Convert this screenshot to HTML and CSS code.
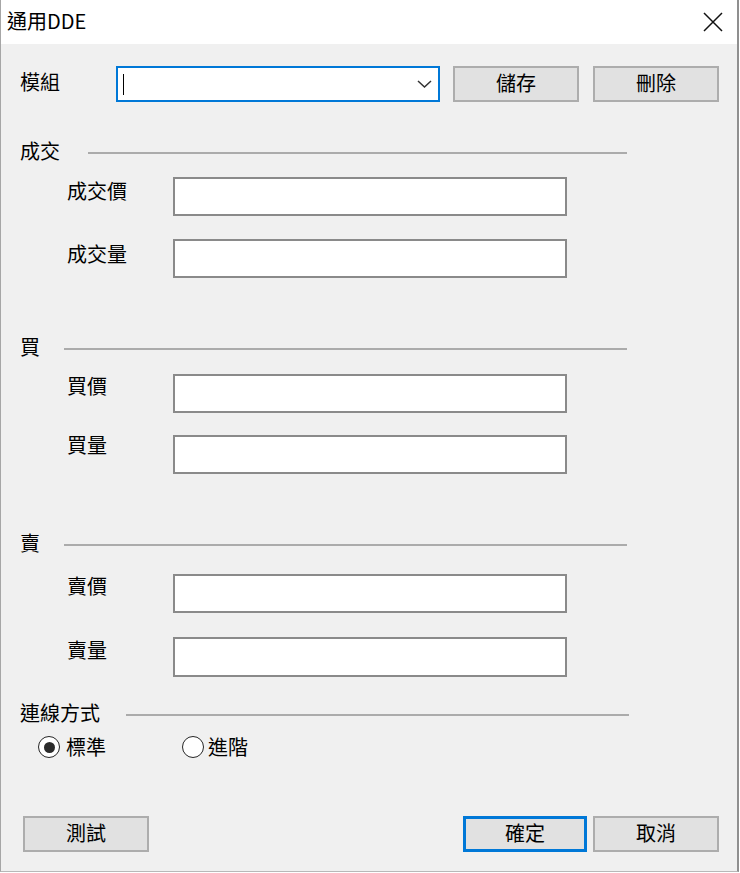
FILE: index.html
```html
<!DOCTYPE html>
<html lang="zh-Hant">
<head>
<meta charset="utf-8">
<title>通用DDE</title>
<link rel="stylesheet" href="styles.css">
</head>
<body>
<div class="window">
  <div class="titlebar">
    <span class="title">通用DDE</span>
    <svg class="close" width="20" height="20" viewBox="0 0 20 20"><path d="M1 1 L19 19 M19 1 L1 19" stroke="#111" stroke-width="1.5" fill="none"/></svg>
  </div>
  <div class="content">
    <div class="row-top">
      <span class="lbl-main">模組</span>
      <div class="combo">
        <span class="caret"></span>
        <svg class="chev" width="15" height="8" viewBox="0 0 15 8"><path d="M1 1 L7.5 7 L14 1" stroke="#333" stroke-width="1.5" fill="none"/></svg>
      </div>
      <button class="btn btn-save">儲存</button>
      <button class="btn btn-del">刪除</button>
    </div>

    <div class="ghead gh-deal"><span class="gtitle">成交</span><i class="rule rule-deal"></i></div>
    <div class="field f1"><span class="flabel">成交價</span><div class="input"></div></div>
    <div class="field f2"><span class="flabel">成交量</span><div class="input"></div></div>

    <div class="ghead gh-buy"><span class="gtitle">買</span><i class="rule rule-one"></i></div>
    <div class="field f3"><span class="flabel">買價</span><div class="input"></div></div>
    <div class="field f4"><span class="flabel">買量</span><div class="input"></div></div>

    <div class="ghead gh-sell"><span class="gtitle">賣</span><i class="rule rule-one"></i></div>
    <div class="field f5"><span class="flabel">賣價</span><div class="input"></div></div>
    <div class="field f6"><span class="flabel">賣量</span><div class="input input-tall"></div></div>

    <div class="ghead gh-conn"><span class="gtitle">連線方式</span><i class="rule rule-conn"></i></div>
    <div class="radio-row">
      <label class="radio r-std"><span class="circle checked"></span><span class="rtext">標準</span></label>
      <label class="radio r-adv"><span class="circle"></span><span class="rtext">進階</span></label>
    </div>

    <div class="row-bottom">
      <button class="btn btn-test">測試</button>
      <div class="right-btns">
        <button class="btn btn-ok">確定</button>
        <button class="btn btn-cancel">取消</button>
      </div>
    </div>
  </div>
</div>
</body>
</html>
```

FILE: styles.css
```css
* { box-sizing: border-box; }
html, body { margin: 0; padding: 0; background: #ffffff; }
body {
  font-family: "Noto Sans CJK TC", "Noto Sans", sans-serif;
  font-size: 20px;
  color: #000;
}
.window {
  width: 739px;
  height: 872px;
  background: #f0f0f0;
  border-left: 1px solid #a6a6a6;
  border-right: 2px solid #8f8f8f;
  border-bottom: 1px solid #b8b8b8;
}
.titlebar {
  height: 44px;
  background: #ffffff;
  display: flex;
  align-items: center;
  justify-content: space-between;
  padding-left: 6px;
  padding-right: 14px;
}
.title {
  font-size: 20px;
  line-height: 26px;
  padding-bottom: 2px;
}
.close { display: block; margin-top: -1px; }
.content { padding-top: 22px; }

.row-top {
  display: flex;
  align-items: center;
  height: 36px;
  padding-left: 19px;
}
.lbl-main { width: 96px; line-height: 26px; padding-bottom: 4px; }
.combo {
  width: 324px;
  height: 36px;
  background: #fff;
  border: 2px solid #0078d7;
  display: flex;
  align-items: center;
  padding-left: 5px;
  padding-right: 6px;
}
.caret { display: block; width: 1px; height: 21px; background: #000; }
.chev { display: block; margin-left: auto; }

.btn {
  font-family: "Noto Sans CJK TC", "Noto Sans", sans-serif;
  font-size: 20px;
  color: #000;
  background: #e1e1e1;
  border: 2px solid #adadad;
  height: 36px;
  width: 126px;
  padding: 0 0 2px 0;
  line-height: 26px;
  border-radius: 0;
}
.btn-save { margin-left: 13px; }
.btn-del { margin-left: 14px; }

.ghead {
  display: flex;
  align-items: center;
  height: 26px;
  margin-left: 19px;
  width: 607px;
}
.gtitle { line-height: 26px; white-space: nowrap; }
.rule {
  display: block;
  flex: 1;
  height: 0;
  border-top: 2px solid #ababab;
  margin-top: 4px;
}
.rule-deal { margin-left: 28px; }
.rule-one { margin-left: 24px; }
.rule-conn { margin-left: 26px; }
.gh-deal { margin-top: 36px; }
.gh-buy { margin-top: 56px; }
.gh-sell { margin-top: 56px; }
.gh-conn { margin-top: 23px; width: 609px; }

.field {
  display: flex;
  align-items: flex-start;
  height: 39px;
  padding-left: 66px;
}
.flabel { width: 106px; line-height: 26px; margin-top: 1px; }
.input {
  width: 394px;
  height: 39px;
  background: #fff;
  border: 2px solid #8a8a8a;
}
.input-tall { height: 40px; }
.f1 { margin-top: 13px; }
.f2 { margin-top: 23px; }
.f3 { margin-top: 14px; }
.f4 { margin-top: 22px; }
.f5 { margin-top: 18px; }
.f6 { margin-top: 24px; height: 40px; }
.f2 .flabel { margin-top: 2px; }
.f3 .flabel { margin-top: -1px; }
.f4 .flabel { margin-top: -3px; }
.f5 .flabel { margin-top: -1px; }
.f6 .flabel { margin-top: 0; }

.radio-row {
  display: flex;
  align-items: center;
  height: 26px;
  margin-top: 8px;
  padding-left: 37px;
}
.radio { display: flex; align-items: center; }
.r-std { width: 144px; }
.circle {
  width: 22px;
  height: 22px;
  border-radius: 50%;
  border: 1.5px solid #262626;
  background: #fff;
  display: flex;
  align-items: center;
  justify-content: center;
}
.circle.checked::after {
  content: "";
  width: 11px;
  height: 11px;
  border-radius: 50%;
  background: #2b2b2b;
}
.rtext { line-height: 26px; margin-left: 6px; }
.r-adv .rtext { margin-left: 4px; }

.row-bottom {
  display: flex;
  justify-content: space-between;
  align-items: center;
  margin-top: 56px;
  padding-left: 22px;
  padding-right: 18px;
}
.right-btns { display: flex; }
.btn-ok {
  width: 124px;
  border: 3px solid #0078d7;
  margin-right: 6px;
}
```
